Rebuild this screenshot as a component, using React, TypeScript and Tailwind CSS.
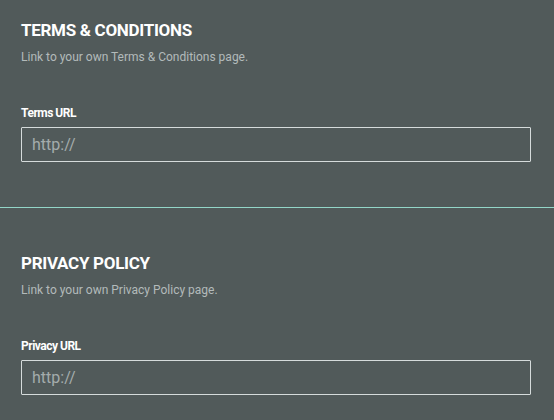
export default function App() {
  const sections = [
    { title: 'Terms & Conditions', desc: 'Link to your own Terms & Conditions page.', label: 'Terms URL' },
    { title: 'Privacy Policy', desc: 'Link to your own Privacy Policy page.', label: 'Privacy URL' },
  ]

  return (
    <div className="min-h-screen w-full bg-[#515a5a] font-['Roboto',sans-serif]">
      {sections.map((s, i) => (
        <div
          key={s.title}
          className={`px-[21px] ${i === 0 ? 'pt-[20px] pb-[45px]' : 'pt-[45px] pb-[26px] border-t border-[#93d6c8]'}`}
        >
          <h2 className="text-[17px] leading-[20px] font-bold uppercase text-white tracking-[-0.3px]">{s.title}</h2>
          <p className="mt-[9px] text-[12px] leading-[16px] text-[#b3baba]">{s.desc}</p>
          <label className="block mt-[40px] text-[12px] leading-[16px] font-bold text-white tracking-[-0.5px]">{s.label}</label>
          <input
            type="text"
            placeholder="http://"
            className="mt-[6px] block w-[510px] h-[35px] px-[10px] bg-transparent border border-[#d5dbdb] rounded-[1px] text-[16px] text-white placeholder:text-[#a4acac] outline-none"
          />
        </div>
      ))}
    </div>
  )
}
